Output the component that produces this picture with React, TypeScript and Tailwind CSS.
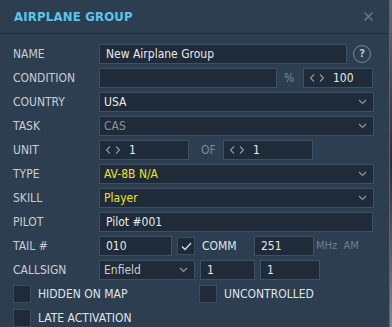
import { ReactNode } from 'react';

const font = { fontFamily: '"DejaVu Sans Condensed", "DejaVu Sans", sans-serif' };

function Chevron() {
  return (
    <svg width="9" height="6" viewBox="0 0 9 6" className="shrink-0">
      <path d="M1 1l3.5 3.5L8 1" fill="none" stroke="#8d9aa6" strokeWidth="1.2" />
    </svg>
  );
}

function Arrows() {
  return (
    <svg width="16" height="10" viewBox="0 0 16 10" className="shrink-0 mr-[8px]">
      <path d="M5 1.5L1.5 5 5 8.5M11 1.5l3.5 3.5L11 8.5" fill="none" stroke="#8d9aa6" strokeWidth="1.1" />
    </svg>
  );
}

function Field({ w, children, className = '' }: { w: string; children?: ReactNode; className?: string }) {
  return (
    <div
      className={`${w} h-[20px] flex items-center px-[6px] bg-[#1f2b38] border border-[#3d5165] text-[12px] text-[#e6eaee] ${className}`}
    >
      {children}
    </div>
  );
}

function Select({ w, text, color = 'text-[#e6eaee]' }: { w: string; text: string; color?: string }) {
  return (
    <div className={`${w} h-[20px] flex items-center justify-between pl-[4px] pr-[6px] bg-[#1f2b38] border border-[#3d5165] text-[12px] ${color}`}>
      <span>{text}</span>
      <Chevron />
    </div>
  );
}

function Box({ checked = false }: { checked?: boolean }) {
  return (
    <div className="w-[18px] h-[18px] shrink-0 flex items-center justify-center bg-[#1f2b38] border border-[#3a4d60]">
      {checked && (
        <svg width="11" height="9" viewBox="0 0 11 9">
          <path d="M1 4.5l3 3L10 1" fill="none" stroke="#d8dee4" strokeWidth="1.3" />
        </svg>
      )}
    </div>
  );
}

function Row({ label, children }: { label: string; children: ReactNode }) {
  return (
    <div className="h-[20px] flex items-center">
      <div className="w-[86px] shrink-0 text-[12px] text-[#c7cfd6]">{label}</div>
      {children}
    </div>
  );
}

export default function App() {
  return (
    <div className="w-[392px] h-[327px] flex overflow-hidden bg-[#2d3e50]" style={font}>
      <div className="w-[389px] flex flex-col">
        {/* Header */}
        <div className="h-[34px] shrink-0 flex items-center justify-between pl-[14px] pr-[16px] border-b border-[#1f2c3a]">
          <span className="text-[13px] font-bold text-[#58c6e9] tracking-[0.2px]">AIRPLANE GROUP</span>
          <svg width="9" height="9" viewBox="0 0 9 9">
            <path d="M0.5 0.5l8 8M8.5 0.5l-8 8" stroke="#6e8294" strokeWidth="1.1" />
          </svg>
        </div>

        {/* Body */}
        <div className="flex flex-col gap-[4px] pt-[10px] pl-[13px]">
          <Row label="NAME">
            <Field w="w-[248px]">New Airplane Group</Field>
            <div className="ml-[6px] w-[18px] h-[18px] rounded-full border-[1.5px] border-[#6e8aa2] flex items-center justify-center text-[11px] font-bold text-[#b9c6d2]">
              ?
            </div>
          </Row>
          <Row label="CONDITION">
            <Field w="w-[178px]" />
            <span className="ml-[7px] w-[19px] text-[12px] text-[#7d8c99]">%</span>
            <Field w="w-[70px]" className="!px-[5px]">
              <Arrows />
              100
            </Field>
          </Row>
          <Row label="COUNTRY">
            <Select w="w-[275px]" text="USA" />
          </Row>
          <Row label="TASK">
            <Select w="w-[275px]" text="CAS" color="text-[#86939f]" />
          </Row>
          <Row label="UNIT">
            <Field w="w-[90px]" className="!px-[5px]">
              <Arrows />1
            </Field>
            <span className="w-[34px] pl-[12px] text-[12px] text-[#7d8c99]">OF</span>
            <Field w="w-[90px]" className="!px-[5px]">
              <Arrows />1
            </Field>
          </Row>
          <Row label="TYPE">
            <Select w="w-[275px]" text="AV-8B N/A" color="text-[#e6e625]" />
          </Row>
          <Row label="SKILL">
            <Select w="w-[275px]" text="Player" color="text-[#e6e625]" />
          </Row>
          <Row label="PILOT">
            <Field w="w-[274px]">Pilot #001</Field>
          </Row>
          <Row label="TAIL #">
            <Field w="w-[73px]">010</Field>
            <div className="ml-[5px]">
              <Box checked />
            </div>
            <span className="w-[59px] pl-[7px] text-[12px] text-[#dfe5ea]">COMM</span>
            <Field w="w-[60px]">251</Field>
            <span className="ml-[2px] text-[11px] text-[#6f7f8d]">MHz&nbsp;&nbsp;AM</span>
          </Row>
          <Row label="CALLSIGN">
            <Select w="w-[96px]" text="Enfield" color="text-[#c7cfd6]" />
            <Field w="w-[55px] ml-[5px]">1</Field>
            <Field w="w-[60px] ml-[5px]">1</Field>
          </Row>
          <div className="h-[20px] flex items-center">
            <div className="w-[186px] flex items-center">
              <Box />
              <span className="ml-[7px] text-[12px] text-[#dfe5ea]">HIDDEN ON MAP</span>
            </div>
            <Box />
            <span className="ml-[7px] text-[12px] text-[#dfe5ea]">UNCONTROLLED</span>
          </div>
          <div className="h-[20px] flex items-center">
            <Box />
            <span className="ml-[7px] text-[12px] text-[#dfe5ea]">LATE ACTIVATION</span>
          </div>
        </div>
      </div>
      <div className="w-px bg-[#c0393b]" />
      <div className="flex-1 bg-gradient-to-b from-[#6b6b6b] via-[#3a2a2a] to-[#8a8a8a]" />
    </div>
  );
}
